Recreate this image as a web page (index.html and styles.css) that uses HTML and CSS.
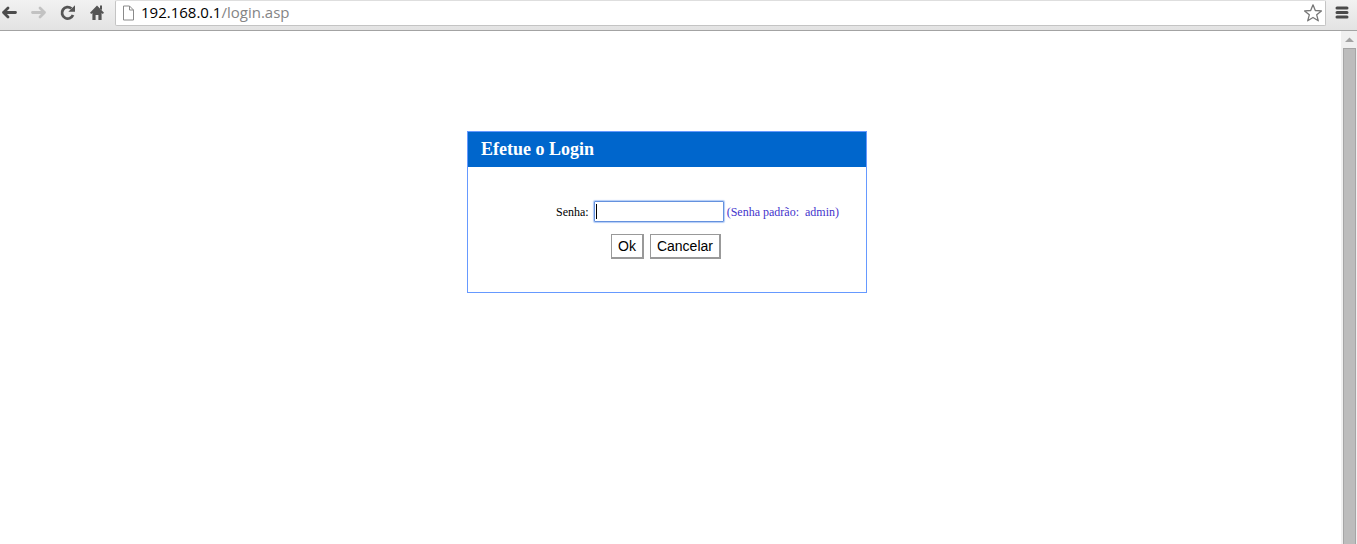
FILE: index.html
```html
<!DOCTYPE html>
<html lang="pt-BR">
<head>
<meta charset="utf-8">
<title>Login</title>
<link rel="stylesheet" href="styles.css">
</head>
<body>
<header class="toolbar">
  <nav class="nav">
    <button class="tool" type="button" aria-label="Voltar">
      <svg width="18" height="16" viewBox="0 0 18 16"><path d="M15.500 7.500H3.500M8 3L3.500 7.500 8 12" fill="none" stroke="#4c4c4c" stroke-width="2.800" stroke-linecap="round" stroke-linejoin="round"/></svg>
    </button>
    <button class="tool" type="button" aria-label="Avançar">
      <svg width="18" height="16" viewBox="0 0 18 16"><path d="M3.500 7.500h12M11 3l4.500 4.500L11 12" fill="none" stroke="#c2c2c2" stroke-width="2.800" stroke-linecap="round" stroke-linejoin="round"/></svg>
    </button>
    <button class="tool" type="button" aria-label="Recarregar">
      <svg width="18" height="16" viewBox="0 0 18 16"><path d="M15 10A5.700 5.700 0 1 1 13.400 3.500" fill="none" stroke="#555" stroke-width="2.800"/><path d="M17 .3v6.500h-6.700z" fill="#555"/></svg>
    </button>
    <button class="tool" type="button" aria-label="Página inicial">
      <svg width="18" height="16" viewBox="0 0 18 16"><path d="M10 .5l7 7.300-1.200 1.200-1.200-1V15h-3.200v-5H8.600v5H5.400V8L4.200 9 3 7.800z" fill="#555"/><path d="M13 .5h2v4.700l-2-2z" fill="#555"/></svg>
    </button>
  </nav>
  <div class="omnibox">
    <svg width="13" height="16" viewBox="0 0 13 16"><path d="M1.500 1h6l4 4v10h-10zM7.500 1v4h4" fill="#fff" stroke="#8a8a8a"/></svg>
    <div class="url" role="textbox" aria-label="Endereço" contenteditable="true" spellcheck="false">192.168.0.1<span class="url-path">/login.asp</span></div>
    <button class="tool" type="button" aria-label="Adicionar aos favoritos">
      <svg width="20" height="20" viewBox="0 0 20 20"><path d="M10 1.800l2.300 5.700 6.100.4-4.700 3.900 1.600 6L10 14.500l-5.300 3.300 1.600-6L1.600 7.900l6.100-.4z" fill="#fff" stroke="#777" stroke-width="1.300" stroke-linejoin="round"/></svg>
    </button>
  </div>
  <button class="tool" type="button" aria-label="Menu">
    <svg width="14" height="14" viewBox="0 0 14 14"><path d="M2 2h10M2 6.500h10M2 11h10" stroke="#4a4a4a" stroke-width="3" stroke-linecap="round"/></svg>
  </button>
</header>
<div class="viewport">
  <main class="page">
    <form class="login">
      <h1 class="login-title">Efetue o Login</h1>
      <div class="login-body">
        <div class="field">
          <label class="caption" for="senha">Senha:</label>
          <span class="entry"><input class="password" id="senha" type="password"><span class="caret"></span></span>
          <span class="caption hint">(Senha padrão:&nbsp; admin)</span>
        </div>
        <div class="actions">
          <button class="action" type="submit">Ok</button>
          <button class="action" type="reset">Cancelar</button>
        </div>
      </div>
    </form>
  </main>
  <div class="scrollbar" aria-hidden="true">
    <svg width="13" height="17" viewBox="0 0 13 17"><path d="M2 11l4.500-4.500L11 11z" fill="#a3a3a3"/></svg>
    <div class="thumb"></div>
  </div>
</div>
</body>
</html>
```
FILE: styles.css
```css
* {
  box-sizing: border-box;
}

body {
  display: flex;
  flex-direction: column;
  height: 100vh;
  margin: 0;
  overflow: hidden;
  background: #fff;
  color: #000;
  font-family: "Liberation Serif", "Times New Roman", serif;
}

.toolbar {
  display: flex;
  align-items: flex-start;
  padding-right: 8px;
  border-bottom: 1px solid #a3a3a3;
  background: linear-gradient(#f2f2f2, #e3e3e3);
}

.nav {
  display: flex;
  gap: 11px;
  padding: 5px 10px 9px 0;
}

.tool {
  display: flex;
  padding: 0;
  border: 0;
  background: none;
}

.toolbar > .tool {
  padding-top: 6px;
}

.omnibox {
  display: flex;
  flex: 1;
  align-items: center;
  height: 26px;
  margin-right: 9px;
  padding: 0 2px 0 6px;
  border: 1px solid #c4c4c4;
  border-top-color: #dedede;
  border-radius: 2px;
  background: #fff;
}

.url {
  flex: 1;
  padding: 0 0 2px 6px;
  outline: 0;
  font: 15px/22px "Open Sans", "Noto Sans", sans-serif;
}

.url-path {
  color: #858585;
}

.viewport {
  display: flex;
  flex: 1;
  min-height: 0;
}

.page {
  flex: 1;
  padding: 100px 7px 0 0;
}

.login {
  width: 400px;
  margin: 0 auto;
  border: 1px solid #6699ff;
}

.login-title {
  margin: 0;
  padding: 0 13px;
  background: #0066cc;
  color: #fff;
  font-size: 18px;
  line-height: 35px;
}

.login-body {
  padding: 34px 0 33px;
}

.field {
  display: flex;
  align-items: center;
  padding-left: 88px;
  font-size: 12px;
  white-space: nowrap;
}

.caption {
  padding-top: 2px;
}

.entry {
  position: relative;
  display: flex;
  margin: 0 3px 0 5px;
}

.password {
  width: 130px;
  height: 21px;
  padding: 2px;
  border: 1px solid #6491de;
  border-radius: 1px;
  outline: 0;
  box-shadow: 0 0 1px 1px #b3cdf7;
}

.caret {
  position: absolute;
  top: 3px;
  left: 2px;
  width: 1px;
  height: 15px;
  background: #000;
}

.hint {
  color: #4433cc;
}

.actions {
  display: flex;
  justify-content: center;
  gap: 6px;
  padding: 12px 2px 0 0;
}

.action {
  height: 25px;
  padding: 0 6px;
  border: solid #999;
  border-width: 1px 2px 2px 1px;
  background: #fff;
  color: #000;
  font: 14px "Liberation Sans", Arial, sans-serif;
}

.scrollbar {
  display: flex;
  flex-direction: column;
  width: 16px;
  padding: 0 1px 0 2px;
  background: #f0f0f0;
}

.thumb {
  flex: 1;
  border: 1px solid #a5a5a5;
  border-bottom: 0;
  background: #bcbcbc;
}
```
